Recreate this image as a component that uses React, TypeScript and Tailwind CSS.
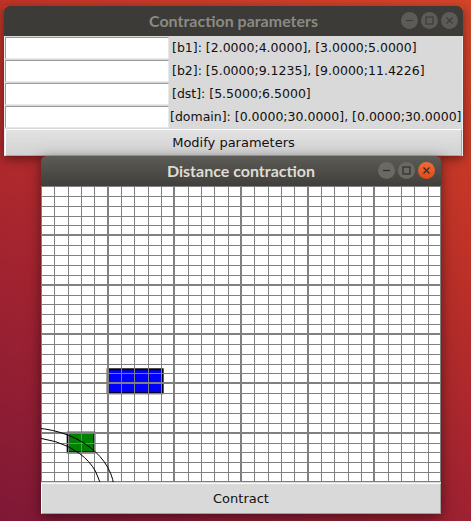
import React from "react";

const rows = [
  { label: "[b1]: [2.0000;4.0000], [3.0000;5.0000]", pad: "pl-[3px]" },
  { label: "[b2]: [5.0000;9.1235], [9.0000;11.4226]", pad: "pl-[3px]" },
  { label: "[dst]: [5.5000;6.5000]", pad: "pl-[3px]" },
  { label: "[domain]: [0.0000;30.0000], [0.0000;30.0000]", pad: "pl-[1px]" },
];

const W = 400;
const H = 296;
const N = 30;
const sx = W / N;
const sy = H / N;

function WinButtons({ active }: { active: boolean }) {
  const base = active ? "bg-[#6a6964]" : "bg-[#5c5b57]";
  const glyph = active ? "#2e2d2a" : "#3e3d39";
  return (
    <div className="flex items-center gap-[3px]">
      <div className={`w-[17px] h-[17px] rounded-full ${base} flex items-center justify-center`}>
        <svg width="9" height="9" viewBox="0 0 9 9">
          <line x1="1" y1="4.5" x2="8" y2="4.5" stroke={glyph} strokeWidth="1.2" />
        </svg>
      </div>
      <div className={`w-[17px] h-[17px] rounded-full ${base} flex items-center justify-center`}>
        <svg width="9" height="9" viewBox="0 0 9 9">
          <rect x="1" y="1" width="7" height="7" fill="none" stroke={glyph} strokeWidth="1.2" />
        </svg>
      </div>
      <div
        className={`w-[17px] h-[17px] rounded-full flex items-center justify-center ${
          active ? "bg-[linear-gradient(#f26b3a,#df4a16)]" : base
        }`}
      >
        <svg width="9" height="9" viewBox="0 0 9 9">
          <path d="M1.5 1.5 L7.5 7.5 M7.5 1.5 L1.5 7.5" stroke={glyph} strokeWidth="1.2" />
        </svg>
      </div>
    </div>
  );
}

function Plot() {
  const idx = Array.from({ length: N + 1 }, (_, i) => i);
  const px = (x: number) => x * sx;
  const py = (y: number) => H - y * sy;
  return (
    <svg width={W} height={H} className="block bg-white">
      {/* b2 */}
      <rect
        x={px(5)}
        y={py(11.4226)}
        width={px(9.1235) - px(5)}
        height={py(9) - py(11.4226)}
        fill="#0000ff"
        stroke="#000"
        strokeWidth="2"
      />
      {/* b1 */}
      <rect
        x={px(2)}
        y={py(5)}
        width={px(4) - px(2)}
        height={py(3) - py(5)}
        fill="#008000"
        stroke="#000"
        strokeWidth="2"
      />
      {idx.map((i) => {
        const x = Math.round(i * sx);
        const thick = i % 5 === 0;
        const p = thick ? x : x + 0.5;
        return (
          <line key={"v" + i} x1={p} y1={0} x2={p} y2={H} stroke="#808080" strokeWidth={thick ? 2 : 1} />
        );
      })}
      {idx.map((j) => {
        const y = Math.round(H - j * sy);
        const thick = j % 5 === 0;
        const p = thick ? y : y + 0.5;
        return (
          <line key={"h" + j} x1={0} y1={p} x2={W} y2={p} stroke="#808080" strokeWidth={thick ? 2 : 1} />
        );
      })}
      <ellipse cx={px(-1)} cy={py(-1)} rx={5.5 * sx} ry={5.5 * sy} fill="none" stroke="#000" strokeWidth="1" />
      <ellipse cx={px(-1)} cy={py(-1)} rx={6.5 * sx} ry={6.5 * sy} fill="none" stroke="#000" strokeWidth="1" />
    </svg>
  );
}

export default function App() {
  return (
    <div className="w-[471px] h-[521px] overflow-hidden pt-[6px] bg-[linear-gradient(205deg,#d4452a_0%,#bd3127_35%,#a22330_65%,#7e1836_100%)] font-['DejaVu_Sans',sans-serif] text-[13px] text-[#111]">
      {/* Contraction parameters window */}
      <div className="ml-[4px] w-[459px] shadow-[0_3px_10px_rgba(0,0,0,0.45)]">
        <div className="h-[30px] bg-[#3c3b37] rounded-t-[6px] flex items-center relative">
          <div className="flex-1 text-center font-['Lato',sans-serif] font-bold text-[16px] text-[#8b8a85]">
            Contraction parameters
          </div>
          <div className="absolute right-[5px] top-[6px]">
            <WinButtons active={false} />
          </div>
        </div>
        <div className="bg-[#d9d9d9] border-l border-r border-[#ececec] pt-[1px]">
          {rows.map((r) => (
            <div key={r.label} className="h-[23px] flex items-start whitespace-nowrap overflow-hidden">
              <div className="w-[164px] h-[22px] shrink-0 bg-white border-t border-l border-[#9a9a9a] border-b border-r border-b-[#e8e8e8] border-r-[#e8e8e8]" />
              <div className={`h-[22px] flex items-center text-[12.5px] ${r.pad}`}>{r.label}</div>
            </div>
          ))}
          <div className="h-[27px] flex items-center justify-center bg-[linear-gradient(#e2e2e2,#d2d2d2)] border-t border-l border-white border-r border-b border-r-[#a8a8a8] border-b-[#a8a8a8]">
            Modify parameters
          </div>
        </div>
      </div>

      {/* Distance contraction window */}
      <div className="ml-[41px] w-[400px] shadow-[0_3px_12px_rgba(0,0,0,0.5)]">
        <div className="h-[30px] rounded-t-[6px] bg-[linear-gradient(#5c5b56,#403f3b)] flex items-center relative">
          <div className="flex-1 text-center font-['Lato',sans-serif] font-bold text-[16px] text-[#dfdbd2]">
            Distance contraction
          </div>
          <div className="absolute right-[6px] top-[6px]">
            <WinButtons active={true} />
          </div>
        </div>
        <div className="bg-[#d9d9d9]">
          <Plot />
          <div className="h-[31px] mt-[1px] flex items-center justify-center bg-[#d9d9d9] border-t border-l border-white border-r border-b border-r-[#a0a0a0] border-b-[#a0a0a0]">
            Contract
          </div>
        </div>
      </div>
    </div>
  );
}
